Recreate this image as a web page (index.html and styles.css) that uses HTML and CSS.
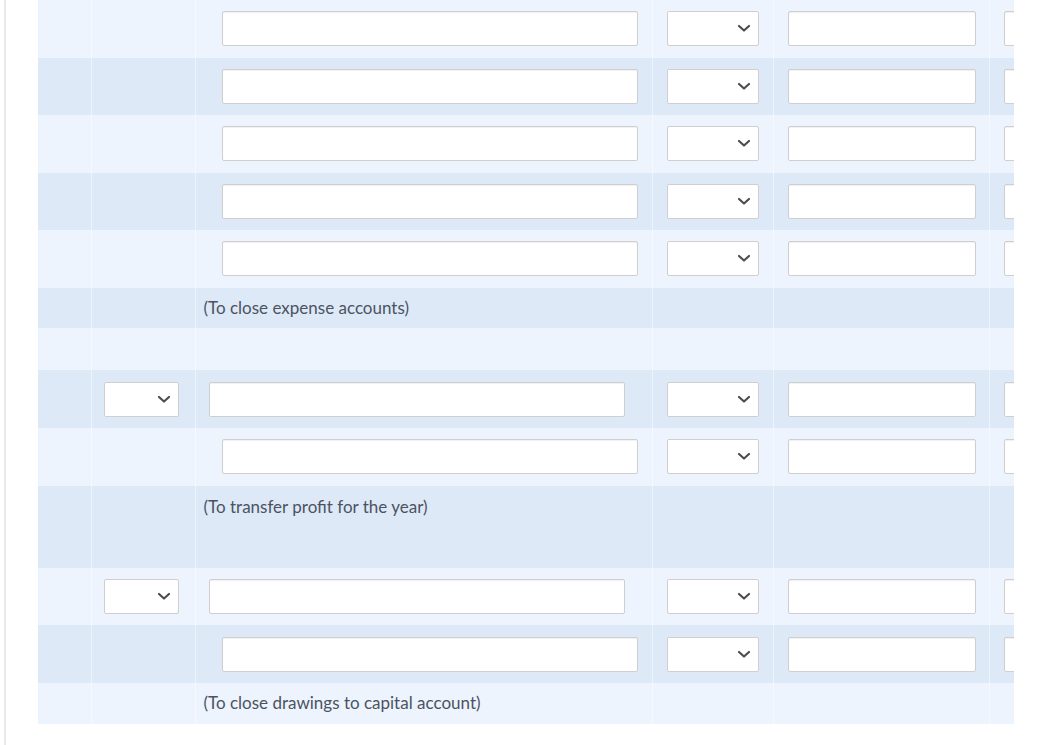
FILE: index.html
```html
<!DOCTYPE html>
<html lang="en">
<head>
<meta charset="utf-8">
<title>Journal entries</title>
<link rel="stylesheet" href="styles.css">
</head>
<body>
<div class="page">
  <div class="clip">
    <table class="journal">
      <colgroup>
        <col class="c-no"><col class="c-date"><col class="c-acct"><col class="c-ref"><col class="c-dr"><col class="c-cr">
      </colgroup>
      <tbody>
        <tr class="row entry light">
          <td></td><td></td>
          <td><div class="field indent"></div></td>
          <td><div class="select ref"><svg class="chev" viewBox="0 0 12 7"><path d="M1 1l5 4.5L11 1"/></svg></div></td>
          <td><div class="field amt"></div></td>
          <td><div class="field amt"></div></td>
        </tr>
        <tr class="row entry dark">
          <td></td><td></td>
          <td><div class="field indent"></div></td>
          <td><div class="select ref"><svg class="chev" viewBox="0 0 12 7"><path d="M1 1l5 4.5L11 1"/></svg></div></td>
          <td><div class="field amt"></div></td>
          <td><div class="field amt"></div></td>
        </tr>
        <tr class="row entry light">
          <td></td><td></td>
          <td><div class="field indent"></div></td>
          <td><div class="select ref"><svg class="chev" viewBox="0 0 12 7"><path d="M1 1l5 4.5L11 1"/></svg></div></td>
          <td><div class="field amt"></div></td>
          <td><div class="field amt"></div></td>
        </tr>
        <tr class="row entry dark">
          <td></td><td></td>
          <td><div class="field indent"></div></td>
          <td><div class="select ref"><svg class="chev" viewBox="0 0 12 7"><path d="M1 1l5 4.5L11 1"/></svg></div></td>
          <td><div class="field amt"></div></td>
          <td><div class="field amt"></div></td>
        </tr>
        <tr class="row entry light">
          <td></td><td></td>
          <td><div class="field indent"></div></td>
          <td><div class="select ref"><svg class="chev" viewBox="0 0 12 7"><path d="M1 1l5 4.5L11 1"/></svg></div></td>
          <td><div class="field amt"></div></td>
          <td><div class="field amt"></div></td>
        </tr>
        <tr class="row note dark">
          <td></td><td></td>
          <td class="memo">(To close expense accounts)</td>
          <td></td><td></td><td></td>
        </tr>
        <tr class="row blank light">
          <td></td><td></td><td></td><td></td><td></td><td></td>
        </tr>
        <tr class="row entry dark">
          <td></td>
          <td><div class="select date"><svg class="chev" viewBox="0 0 12 7"><path d="M1 1l5 4.5L11 1"/></svg></div></td>
          <td><div class="field"></div></td>
          <td><div class="select ref"><svg class="chev" viewBox="0 0 12 7"><path d="M1 1l5 4.5L11 1"/></svg></div></td>
          <td><div class="field amt"></div></td>
          <td><div class="field amt"></div></td>
        </tr>
        <tr class="row entry light tall1">
          <td></td><td></td>
          <td><div class="field indent"></div></td>
          <td><div class="select ref"><svg class="chev" viewBox="0 0 12 7"><path d="M1 1l5 4.5L11 1"/></svg></div></td>
          <td><div class="field amt"></div></td>
          <td><div class="field amt"></div></td>
        </tr>
        <tr class="row note-tall dark">
          <td></td><td></td>
          <td class="memo">(To transfer profit for the year)</td>
          <td></td><td></td><td></td>
        </tr>
        <tr class="row entry light tall1">
          <td></td>
          <td><div class="select date"><svg class="chev" viewBox="0 0 12 7"><path d="M1 1l5 4.5L11 1"/></svg></div></td>
          <td><div class="field"></div></td>
          <td><div class="select ref"><svg class="chev" viewBox="0 0 12 7"><path d="M1 1l5 4.5L11 1"/></svg></div></td>
          <td><div class="field amt"></div></td>
          <td><div class="field amt"></div></td>
        </tr>
        <tr class="row entry dark">
          <td></td><td></td>
          <td><div class="field indent"></div></td>
          <td><div class="select ref"><svg class="chev" viewBox="0 0 12 7"><path d="M1 1l5 4.5L11 1"/></svg></div></td>
          <td><div class="field amt"></div></td>
          <td><div class="field amt"></div></td>
        </tr>
        <tr class="row note light">
          <td></td><td></td>
          <td class="memo">(To close drawings to capital account)</td>
          <td></td><td></td><td></td>
        </tr>
      </tbody>
    </table>
  </div>
</div>
</body>
</html>
```

FILE: styles.css
```css
html, body {
  margin: 0;
  padding: 0;
  background: #ffffff;
}

body {
  font-family: Lato, "Open Sans", "Liberation Sans", sans-serif;
  color: #4b5361;
  overflow: hidden;
}

.page {
  margin-left: 4px;
  border-left: 2px solid #e9e9e9;
  min-height: 745px;
  padding-left: 32px;
}

.clip {
  width: 976px;
  overflow: hidden;
}

.journal {
  width: 1130px;
  table-layout: fixed;
  border-collapse: collapse;
  border-spacing: 0;
}

.c-no { width: 53px; }
.c-date { width: 104px; }
.c-acct { width: 457px; }
.c-ref { width: 121px; }
.c-dr { width: 216px; }
.c-cr { width: 179px; }

.journal td {
  padding: 0;
  vertical-align: middle;
  border-left: 1px solid rgba(255, 255, 255, 0.45);
}

.journal td:first-child {
  border-left: none;
}

.light { background: #edf4fe; }
.dark { background: #dee9f8; }

.entry { height: 57.5px; }
.entry.tall1 { height: 57.8px; }
.note { height: 40.8px; }
.blank { height: 42px; }
.note-tall { height: 82px; }

.field {
  box-sizing: border-box;
  height: 35px;
  background: #ffffff;
  border: 1px solid #cfcfcf;
  border-radius: 2px;
  box-shadow: inset 0 1px 1px rgba(0, 0, 0, 0.06);
}

.journal td .field {
  width: 416px;
  margin-left: 13px;
}

.journal td .field.indent {
  margin-left: 26px;
}

.journal td .field.amt {
  width: 188px;
  margin-left: 14px;
}

.select {
  box-sizing: border-box;
  height: 35px;
  background: #ffffff;
  border: 1px solid #cfcfcf;
  border-radius: 2px;
  display: flex;
  align-items: center;
  justify-content: flex-end;
  padding-right: 8px;
}

.select.ref {
  width: 92px;
  margin-left: 14px;
}

.select.date {
  width: 75px;
  margin-left: 12px;
}

.chev {
  width: 12px;
  height: 7px;
  overflow: visible;
}

.chev path {
  fill: none;
  stroke: #4d4d4d;
  stroke-width: 2.2;
  stroke-linecap: round;
  stroke-linejoin: round;
}

.memo {
  font-size: 17px;
  line-height: 22px;
  padding-left: 8px !important;
  white-space: nowrap;
}

.note-tall .memo {
  vertical-align: top;
  padding-top: 10px !important;
}
```
